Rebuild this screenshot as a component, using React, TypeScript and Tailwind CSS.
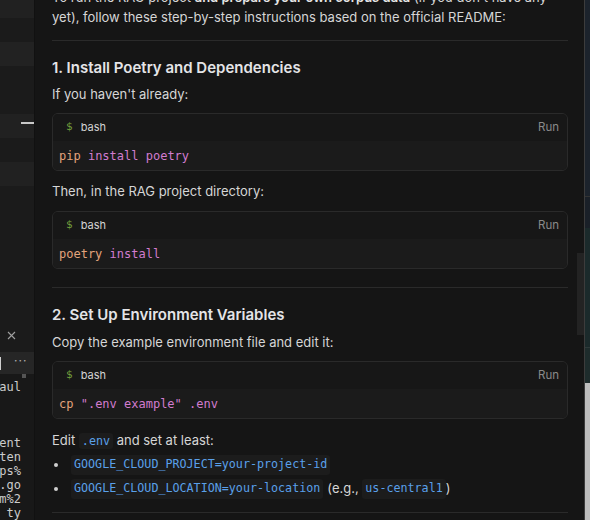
import React from 'react';

const sans = { fontFamily: 'Inter, "Noto Sans", sans-serif' };
const mono = { fontFamily: '"DejaVu Sans Mono", monospace' };

function CodeBlock({ children }: { children: React.ReactNode }) {
  return (
    <div className="rounded-md border border-[#2a2a2a] overflow-hidden">
      <div className="h-[27px] bg-[#171717] flex items-center justify-between pl-[13px] pr-[8px] text-[11px]">
        <div className="flex items-center gap-[8px]">
          <span className="text-[#6f9a3c] text-[11px]" style={mono}>$</span>
          <span className="text-[#d4d4d4]">bash</span>
        </div>
        <span className="text-[#8a8a8a] text-[11.5px]">Run</span>
      </div>
      <div className="h-[29px] bg-[#1b1b1b] flex items-center pl-[6px] text-[12px]" style={mono}>
        {children}
      </div>
    </div>
  );
}

function InlineCode({ children }: { children: React.ReactNode }) {
  return (
    <span className="bg-[#1c1c1c] text-[#5aa0ea] rounded-[3px] px-[3px] py-[1px] text-[11.7px]" style={mono}>
      {children}
    </span>
  );
}

function LeftPanel() {
  const lines = ['aul', '', '', '', 'ent', 'ten', 'ps%', '.go', 'm%2', 'ty'];
  return (
    <div className="w-[35px] shrink-0 bg-[#1b1b1b] border-r border-[#111111] flex flex-col overflow-hidden">
      <div className="h-[18px] bg-[#212121]" />
      <div className="h-[24px] bg-[#1b1b1b]" />
      <div className="h-[24px] bg-[#222222]" />
      <div className="h-[48px] bg-[#1b1b1b]" />
      <div className="h-[24px] bg-[#212121] relative">
        <div className="absolute left-[21px] top-[8px] w-[13px] h-[2px] bg-[#c8c8c8]" />
      </div>
      <div className="h-[24px] bg-[#1b1b1b]" />
      <div className="h-[24px] bg-[#212121]" />
      <div className="h-[134px]" />
      <div className="h-[33px] flex items-center pl-[7px]">
        <svg width="9" height="9" viewBox="0 0 9 9">
          <path d="M1 1L8 8M8 1L1 8" stroke="#a0a0a0" strokeWidth="1.1" />
        </svg>
      </div>
      <div className="h-[22px] bg-[#262626] flex items-center relative">
        <div className="w-[1px] h-[13px] bg-[#cfcfcf]" />
        <span className="ml-[13px] text-[#b0b0b0] text-[12px] tracking-[1px] leading-none -mt-[4px]">···</span>
        <div className="absolute left-[22px] top-[22px] w-[4px] h-[4px] bg-[#555555]" />
      </div>
      <div className="bg-[#181818] flex-1 pt-[6px] text-[12px] leading-[14px] text-[#cccccc]" style={mono}>
        {lines.map((l, i) => (
          <div key={i} className="w-[21px] h-[14px] flex justify-end whitespace-nowrap">
            <span>{l}</span>
          </div>
        ))}
      </div>
    </div>
  );
}

function RightStrip() {
  return (
    <div className="w-[6px] shrink-0 flex border-l border-[#3c3c3c]">
      <div className="flex-1 flex flex-col">
        <div className="h-[196px] bg-[#1c232c]" />
        <div className="h-[32px] bg-[#1a2028] border-t border-[#333]" />
        <div className="h-[119px] bg-[#1b2a2b]" />
        <div className="h-[36px] bg-[#1e2c2c] border-t border-[#2e3a3a]" />
        <div className="flex-1 bg-[#bdbdbd]" />
      </div>
    </div>
  );
}

export default function App() {
  return (
    <div className="w-[590px] h-[520px] overflow-hidden flex bg-[#151515]" style={sans}>
      <LeftPanel />
      <div className="flex-1 relative overflow-hidden">
        <div className="absolute right-0 top-[253px] w-[7px] h-[82px] bg-[#232323]" />
        <div className="pl-[17px] pr-[16px] text-[13px] text-[#d6d6d6]">
          <p className="leading-[20px] -mt-[13px]">
            To run the RAG project <strong className="font-semibold text-[#e6e6e6]">and prepare your own corpus data</strong> (if you don't have any
            <br />
            yet), follow these step-by-step instructions based on the official README:
          </p>
          <div className="mt-[13px] h-px bg-[#2a2a2a]" />
          <h3 className="mt-[17px] leading-[20px] text-[15px] font-semibold text-[#e4e4e7]">
            1. Install Poetry and Dependencies
          </h3>
          <p className="mt-[6px] leading-[20px]">If you haven't already:</p>
          <div className="mt-[9px]">
            <CodeBlock>
              <span className="text-[#e3a47b]">pip</span>
              <span className="text-[#d27ccf]">&nbsp;install poetry</span>
            </CodeBlock>
          </div>
          <p className="mt-[10px] leading-[20px]">Then, in the RAG project directory:</p>
          <div className="mt-[10px]">
            <CodeBlock>
              <span className="text-[#e3a47b]">poetry</span>
              <span className="text-[#d27ccf]">&nbsp;install</span>
            </CodeBlock>
          </div>
          <div className="mt-[18px] h-px bg-[#2a2a2a]" />
          <h3 className="mt-[17px] leading-[20px] text-[15px] font-semibold text-[#e4e4e7]">
            2. Set Up Environment Variables
          </h3>
          <p className="mt-[7px] leading-[20px]">Copy the example environment file and edit it:</p>
          <div className="mt-[9px]">
            <CodeBlock>
              <span className="text-[#e3a47b]">cp</span>
              <span className="text-[#d27ccf]">&nbsp;".env example" .env</span>
            </CodeBlock>
          </div>
          <p className="mt-[11px] leading-[20px]">
            Edit <InlineCode>.env</InlineCode> and set at least:
          </p>
          <ul className="mt-[2px]">
            <li className="h-[24px] flex items-center">
              <span className="w-[4px] h-[4px] rounded-full bg-[#cfcfcf] ml-[2px] mr-[13px]" />
              <InlineCode>GOOGLE_CLOUD_PROJECT=your-project-id</InlineCode>
            </li>
            <li className="h-[24px] flex items-center">
              <span className="w-[4px] h-[4px] rounded-full bg-[#cfcfcf] ml-[2px] mr-[13px]" />
              <InlineCode>GOOGLE_CLOUD_LOCATION=your-location</InlineCode>
              <span className="ml-[4px]">(e.g.,&nbsp;</span>
              <InlineCode>us-central1</InlineCode>
              <span>)</span>
            </li>
          </ul>
          <div className="mt-[11px] h-px bg-[#2a2a2a]" />
        </div>
      </div>
      <RightStrip />
    </div>
  );
}
